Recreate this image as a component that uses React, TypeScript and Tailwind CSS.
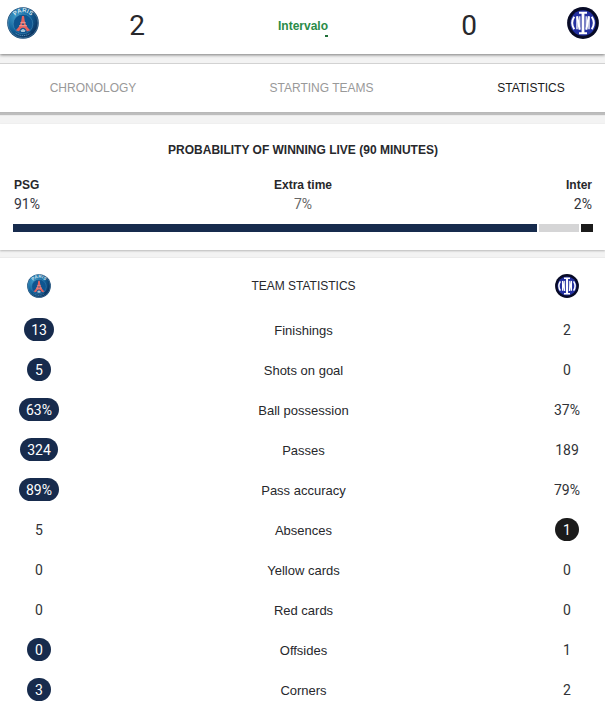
type Stat = { label: string; home: string; away: string; lead?: "home" | "away" };

const stats: Stat[] = [
  { label: "Finishings", home: "13", away: "2", lead: "home" },
  { label: "Shots on goal", home: "5", away: "0", lead: "home" },
  { label: "Ball possession", home: "63%", away: "37%", lead: "home" },
  { label: "Passes", home: "324", away: "189", lead: "home" },
  { label: "Pass accuracy", home: "89%", away: "79%", lead: "home" },
  { label: "Absences", home: "5", away: "1", lead: "away" },
  { label: "Yellow cards", home: "0", away: "0" },
  { label: "Red cards", home: "0", away: "0" },
  { label: "Offsides", home: "0", away: "1", lead: "home" },
  { label: "Corners", home: "3", away: "2", lead: "home" },
];

const tabs = ["CHRONOLOGY", "STARTING TEAMS", "STATISTICS"];

function ParisLogo({ className, id }: { className: string; id: string }) {
  return (
    <svg viewBox="0 0 32 32" className={className} role="img" aria-label="PSG">
      <defs>
        <radialGradient id={`${id}-fill`} cx="0.3" cy="0.3" r="0.8">
          <stop offset="0" stopColor="#3f9cc9" />
          <stop offset="0.55" stopColor="#12639c" />
          <stop offset="1" stopColor="#082a55" />
        </radialGradient>
        <path id={`${id}-arc`} d="M5.9 14 A10.2 10.2 0 0 1 26.1 14" />
      </defs>
      <circle cx="16" cy="16" r="15.8" fill="#0d4070" />
      <circle cx="16" cy="16" r="15" fill={`url(#${id}-fill)`} stroke="#6f9dbb" strokeWidth="0.5" />
      <circle cx="16" cy="17" r="9.8" fill="#0e5590" stroke="#4b92bf" strokeWidth="0.5" />
      <text fill="#d5e5ef" fontSize="6" fontWeight="700" fontFamily="Liberation Sans, sans-serif" textAnchor="middle">
        <textPath href={`#${id}-arc`} startOffset="50%">PARIS</textPath>
      </text>
      <path
        d="M15 9h2l.6 4.2c.6 4 2.4 7.2 5.6 10l-3.4 1.2c-.9-2.4-2-3.6-3.8-3.6s-2.9 1.2-3.8 3.6l-3.4-1.2c3.2-2.8 5-6 5.6-10z"
        fill="#e4635f"
      />
      <path d="M13.2 15.7h5.6M12 18.7h8" stroke="#f3b6ae" strokeWidth="0.7" />
      <path d="M15 18.1l1-2.3 1 2.3z" fill="#0e5590" />
      <path d="M13.4 23.6l2.6-1.8 2.6 1.8-1 1.5h-3.2z" fill="#a9c4d6" />
      <path d="M8.6 26.2c4.5 3.2 10.3 3.2 14.8 0" fill="none" stroke="#5d93b8" strokeWidth="0.9" strokeDasharray="1.4 0.8" />
    </svg>
  );
}

function InterLogo({ className }: { className: string }) {
  return (
    <svg viewBox="0 0 32 32" className={className} role="img" aria-label="Inter">
      <circle cx="16" cy="16" r="15.9" fill="#070a26" />
      <circle cx="16" cy="16" r="12.8" fill="#2330a0" />
      <g fill="none" stroke="#fff">
        <path d="M12 5.8h8M12 26.2h8" strokeWidth="2" />
        <path d="M16 5.5v21" strokeWidth="2.8" />
        <path d="M12.8 9.2v13.4M19.2 9.2v13.4" strokeWidth="1.2" />
        <path d="M10.2 9.2l2.4 13.4M21.8 9.2l-2.4 13.4" strokeWidth="2" />
        <path d="M10 9.4v12.8M22 9.4v12.8" strokeWidth="1.4" />
        <path d="M7.2 9.8c-2.6 4-2.6 8.4 0 12.4M24.8 9.8c2.6 4 2.6 8.4 0 12.4" strokeWidth="2" />
      </g>
    </svg>
  );
}

function Value({ value, badge }: { value: string; badge?: string }) {
  return (
    <div className="flex h-[39px] items-center justify-center">
      <span
        className={`flex h-[23px] min-w-6 items-center justify-center rounded-full px-[7px] font-[Roboto,sans-serif] text-sm ${
          badge ?? "text-[#303236]"
        }`}
      >
        {value}
      </span>
    </div>
  );
}

function Outcome({ name, chance, align }: { name: string; chance: string; align: string }) {
  return (
    <div className={align}>
      <dt className="text-xs leading-5 font-bold text-[#27282c]">{name}</dt>
      <dd className="font-[Roboto,sans-serif] text-sm leading-[18px]">{chance}</dd>
    </div>
  );
}

export default function App() {
  return (
    <main className="min-h-screen bg-[#f3f3f3] font-['Liberation_Sans',Arial,sans-serif] text-[#27282c]">
      <header className="grid h-[54px] grid-cols-[54px_1fr_1fr_1fr_53px] bg-white pb-0.5 text-center shadow-[0_1px_3px_rgba(0,0,0,0.5)]">
        <ParisLogo id="psg-large" className="mt-[7px] ml-[7px] size-8" />
        <span className="self-center font-[Roboto,sans-serif] text-[28px] leading-8">2</span>
        <span className="self-center text-xs font-bold text-[#2a8c48]">
          <span className="relative">
            Intervalo
            <i className="absolute right-0 -bottom-1 h-0.5 w-[3px] bg-[#1f6f38]" />
          </span>
        </span>
        <span className="self-center font-[Roboto,sans-serif] text-[28px] leading-8">0</span>
        <InterLogo className="mt-[7px] mr-[6px] size-8 justify-self-end" />
      </header>

      <nav className="mt-[9px] grid h-[50px] grid-cols-[186fr_271fr_148fr] border-t border-b border-t-[#d2d2d2] border-b-[#b8b8b8] bg-white shadow-[0_2px_1px_rgba(0,0,0,0.22)]">
        {tabs.map((tab) => (
          <button
            key={tab}
            type="button"
            className={`text-xs ${tab === "STATISTICS" ? "text-[#1b1b1b]" : "text-[#999]"}`}
          >
            {tab}
          </button>
        ))}
      </nav>

      <section className="mt-[11px] bg-white pt-4 pr-3 pb-[18px] pl-[13px] shadow-[0_1px_2px_rgba(0,0,0,0.25)]">
        <h2 className="text-center text-xs leading-5 font-bold">PROBABILITY OF WINNING LIVE (90 MINUTES)</h2>
        <dl className="mt-[15px] grid grid-cols-3">
          <Outcome name="PSG" chance="91%" align="pl-px text-left text-[#33343e]" />
          <Outcome name="Extra time" chance="7%" align="text-center text-[#666]" />
          <Outcome name="Inter" chance="2%" align="pr-px text-right text-[#33343a]" />
        </dl>
        <div className="mt-[11px] flex h-2 gap-0.5">
          <div className="grow bg-[#172b4d]" />
          <div className="w-[7%] bg-[#d5d5d6]" />
          <div className="w-[2%] bg-[#1b1b1b]" />
        </div>
      </section>

      <section className="mt-2 bg-white pt-2 pb-2.5 shadow-[0_0_1px_rgba(0,0,0,0.2)]">
        <table className="w-full table-fixed text-center">
          <colgroup>
            <col className="w-[78px]" />
            <col />
            <col className="w-[76px]" />
          </colgroup>
          <thead>
            <tr className="h-10">
              <th scope="col">
                <ParisLogo id="psg-small" className="mx-auto size-6" />
              </th>
              <th scope="col" className="text-xs font-normal">TEAM STATISTICS</th>
              <th scope="col">
                <InterLogo className="mx-auto size-6" />
              </th>
            </tr>
          </thead>
          <tbody>
            {stats.map((s) => (
              <tr key={s.label} className="h-10 first:h-11">
                <td className="p-0 pb-px align-bottom">
                  <Value value={s.home} badge={s.lead === "home" ? "bg-[#172b4d] text-white" : undefined} />
                </td>
                <td className="p-0 pt-0.5 align-bottom text-[13px] leading-[38px]">{s.label}</td>
                <td className="p-0 pb-px align-bottom">
                  <Value value={s.away} badge={s.lead === "away" ? "bg-[#1b1b1b] text-white" : undefined} />
                </td>
              </tr>
            ))}
          </tbody>
        </table>
      </section>
    </main>
  );
}
